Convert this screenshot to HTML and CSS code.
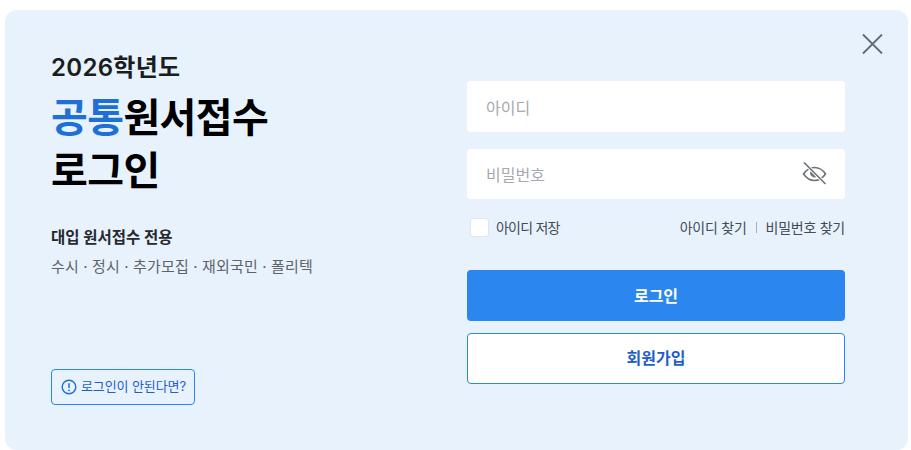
FILE: index.html
```html
<!DOCTYPE html>
<html lang="ko">
<head>
<meta charset="utf-8">
<title>로그인</title>
<link rel="stylesheet" href="styles.css">
</head>
<body>
<main class="panel">
  <button class="close" aria-label="닫기">
    <svg width="22" height="22" viewBox="0 0 22 22"><path d="M2 1.500L21 20.500M21 1.500L2 20.500" fill="none" stroke="#666b73" stroke-width="1.800"/></svg>
  </button>
  <section class="intro">
    <p class="year">2026학년도</p>
    <h1 class="title"><span class="accent">공통</span>원서접수<br>로그인</h1>
    <p class="sub">대입 원서접수 전용</p>
    <p class="desc">수시 · 정시 · 추가모집 · 재외국민 · 폴리텍</p>
    <a class="help">
      <svg width="16" height="16" viewBox="0 0 16 16"><circle cx="8" cy="8" r="6.800" fill="none" stroke="#1f6fd6" stroke-width="1.400"/><path d="M8 4.200V9" stroke="#1f6fd6" stroke-width="1.500" fill="none"/><circle cx="8" cy="11.300" r="0.900" fill="#1f6fd6"/></svg>
      <span class="help-text">로그인이 안된다면?</span>
    </a>
  </section>
  <section class="form">
    <div class="field">아이디</div>
    <div class="field">
      <span>비밀번호</span>
      <svg class="eye" width="25" height="24" viewBox="0 0 25 24"><path d="M1.500 12C4 8.500 8 5.500 12.500 5.500S21.500 8.500 23.500 12C21 15.500 17 18.500 12.500 18.500S4 15.500 1.500 12Z" fill="none" stroke="#6d7178" stroke-width="1.600"/><path d="M9 8.500L15 14.500A4.300 4.300 0 0 1 9 8.500Z" fill="#6d7178"/><path d="M2 0.500L23.500 22" stroke="#fff" stroke-width="3.400" fill="none"/><path d="M2 0.500L23.500 22" stroke="#6d7178" stroke-width="1.600" fill="none"/></svg>
    </div>
    <div class="options">
      <label class="save"><span class="check"></span><span class="save-text">아이디 저장</span></label>
      <div class="links"><a>아이디 찾기</a><i class="sep"></i><a>비밀번호 찾기</a></div>
    </div>
    <button class="btn primary">로그인</button>
    <button class="btn outline">회원가입</button>
  </section>
</main>
</body>
</html>
```
FILE: styles.css
```css
* { box-sizing: border-box; }
html, body { margin: 0; height: 100%; overflow: hidden; background: #fff; }
body {
  padding: 10px 3px 0 5px;
  font-family: Inter, "Noto Sans CJK KR", sans-serif;
}
p, h1 { margin: 0; }
.panel {
  position: relative;
  display: flex;
  justify-content: space-between;
  height: 440px;
  padding: 0 63px 0 46px;
  background: #e8f2fd;
  border-radius: 12px;
}
.close {
  position: absolute;
  top: 23px;
  right: 25px;
  width: 22px;
  height: 22px;
  padding: 0;
  border: 0;
  background: none;
  line-height: 0;
}
.intro { display: flex; flex-direction: column; align-items: flex-start; padding-top: 41px; }
.year { font-size: 24px; line-height: 34px; font-weight: 600; color: #1a1c20; letter-spacing: 0.3px; }
.title { margin-top: 6px; font-size: 40px; line-height: 53px; font-weight: 700; color: #000; letter-spacing: -0.6px; }
.accent { color: #1f6fd6; }
.sub { margin-top: 30px; font-size: 15.5px; line-height: 22px; font-weight: 700; color: #26282c; }
.desc { margin-top: 7px; font-size: 15px; line-height: 22px; color: #5f6368; letter-spacing: 0.14px; }
.help {
  display: flex;
  align-items: center;
  gap: 4px;
  margin-top: 91px;
  height: 36px;
  padding: 0 8px 0 9px;
  border: 1px solid #2b86ee;
  border-radius: 4px;
  font-size: 13px;
  letter-spacing: -0.1px;
  color: #1f5fc8;
}
.help-text { padding-bottom: 3px; }
.form { width: 378px; padding-top: 71px; }
.field {
  display: flex;
  align-items: center;
  justify-content: space-between;
  height: 51px;
  padding: 0 18px 0 19px;
  margin-bottom: 17px;
  background: #fff;
  border-radius: 4px;
  font-size: 16px;
  color: #a5a9af;
}
.field + .field { height: 50px; margin-bottom: 0; }
.options {
  display: flex;
  justify-content: space-between;
  align-items: center;
  height: 20px;
  margin: 18px 0 33px;
  font-size: 14px;
  color: #46494f;
}
.save { display: flex; align-items: center; gap: 7px; padding-left: 3px; }
.save-text { letter-spacing: -0.8px; }
.check { width: 19px; height: 19px; background: #fff; border: 1px solid #e2e6ea; border-radius: 3px; }
.links { display: flex; align-items: center; letter-spacing: -0.25px; }
.sep { width: 1px; height: 11px; margin: 0 9px; background: #a9adb3; }
.btn {
  display: block;
  width: 100%;
  height: 51px;
  padding: 0 0 2px;
  border-radius: 4px;
  font: 700 16px Inter, "Noto Sans CJK KR", sans-serif;
}
.primary { background: #2b86ee; border: 0; color: #fff; }
.outline { margin-top: 12px; padding-bottom: 4px; background: #fff; border: 1px solid #2b86ee; color: #1f5fc8; }
```
